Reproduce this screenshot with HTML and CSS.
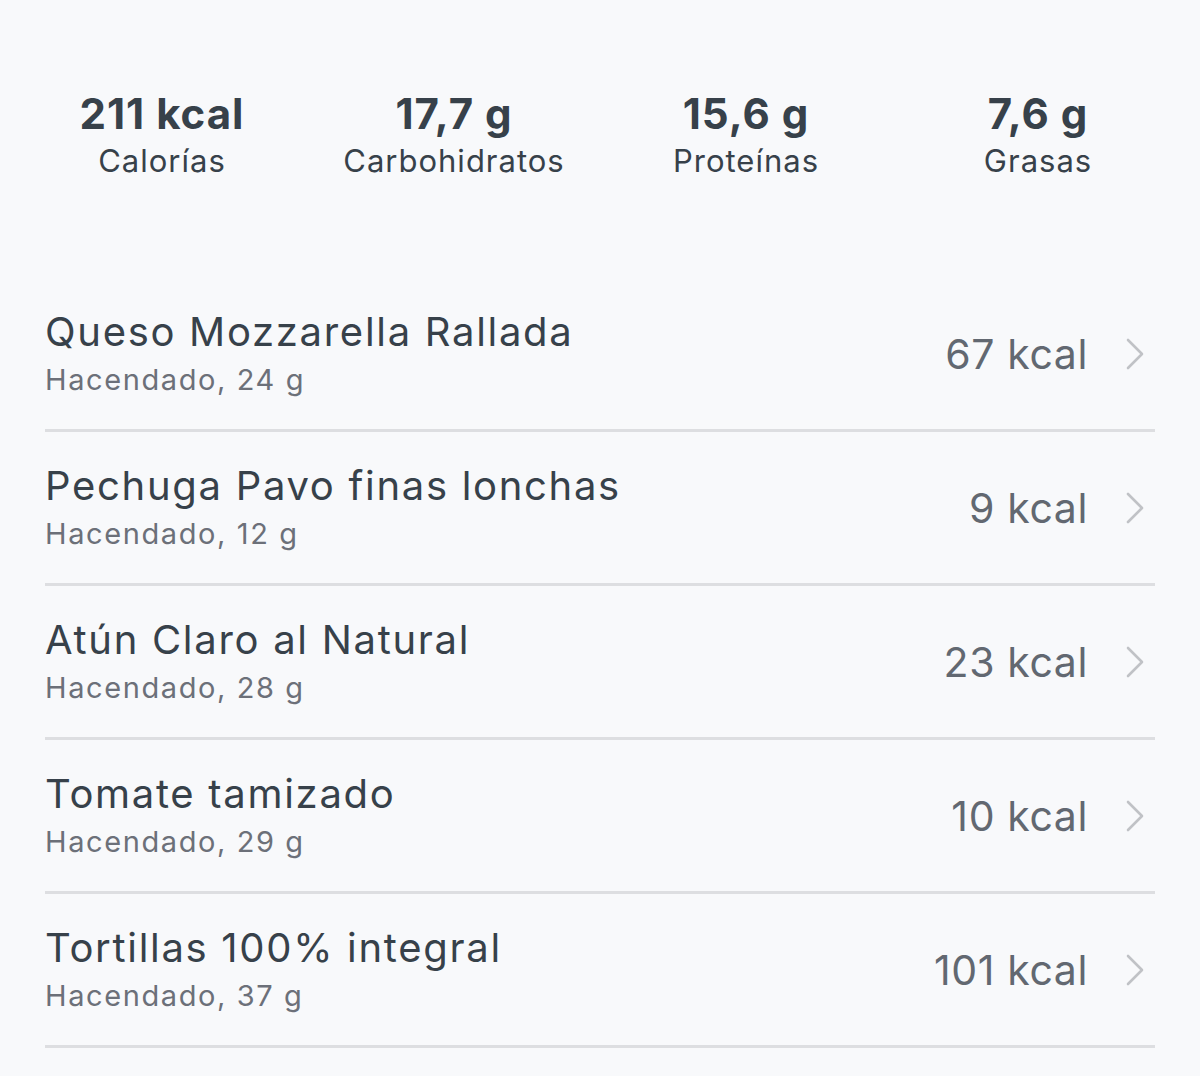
FILE: index.html
```html
<!DOCTYPE html>
<html lang="es">
<head>
<meta charset="utf-8">
<link rel="stylesheet" href="styles.css">
</head>
<body>
<div class="page">
  <section class="stats">
    <div class="stat"><div class="stat-value">211 kcal</div><div class="stat-label">Calorías</div></div>
    <div class="stat"><div class="stat-value">17,7 g</div><div class="stat-label">Carbohidratos</div></div>
    <div class="stat"><div class="stat-value">15,6 g</div><div class="stat-label">Proteínas</div></div>
    <div class="stat"><div class="stat-value">7,6 g</div><div class="stat-label">Grasas</div></div>
  </section>
  <ul class="list">
    <li class="row">
      <div class="info"><div class="name">Queso Mozzarella Rallada</div><div class="sub">Hacendado, 24 g</div></div>
      <div class="kcal">67 kcal</div>
      <svg class="chev" viewBox="0 0 18 32" width="18" height="32"><path d="M2 2 L16 16 L2 30" fill="none" stroke="currentColor" stroke-width="2.6" stroke-linecap="round" stroke-linejoin="round"/></svg>
    </li>
    <li class="row">
      <div class="info"><div class="name">Pechuga Pavo finas lonchas</div><div class="sub">Hacendado, 12 g</div></div>
      <div class="kcal">9 kcal</div>
      <svg class="chev" viewBox="0 0 18 32" width="18" height="32"><path d="M2 2 L16 16 L2 30" fill="none" stroke="currentColor" stroke-width="2.6" stroke-linecap="round" stroke-linejoin="round"/></svg>
    </li>
    <li class="row">
      <div class="info"><div class="name">Atún Claro al Natural</div><div class="sub">Hacendado, 28 g</div></div>
      <div class="kcal">23 kcal</div>
      <svg class="chev" viewBox="0 0 18 32" width="18" height="32"><path d="M2 2 L16 16 L2 30" fill="none" stroke="currentColor" stroke-width="2.6" stroke-linecap="round" stroke-linejoin="round"/></svg>
    </li>
    <li class="row">
      <div class="info"><div class="name">Tomate tamizado</div><div class="sub">Hacendado, 29 g</div></div>
      <div class="kcal">10 kcal</div>
      <svg class="chev" viewBox="0 0 18 32" width="18" height="32"><path d="M2 2 L16 16 L2 30" fill="none" stroke="currentColor" stroke-width="2.6" stroke-linecap="round" stroke-linejoin="round"/></svg>
    </li>
    <li class="row">
      <div class="info"><div class="name">Tortillas 100% integral</div><div class="sub">Hacendado, 37 g</div></div>
      <div class="kcal">101 kcal</div>
      <svg class="chev" viewBox="0 0 18 32" width="18" height="32"><path d="M2 2 L16 16 L2 30" fill="none" stroke="currentColor" stroke-width="2.6" stroke-linecap="round" stroke-linejoin="round"/></svg>
    </li>
  </ul>
</div>
</body>
</html>
```
FILE: styles.css
```css
html, body {
  margin: 0;
  padding: 0;
  background: #f8f9fb;
}
body {
  font-family: Inter, "Nunito Sans", "Open Sans", sans-serif;
  color: #37414a;
  width: 1200px;
  height: 1076px;
  overflow: hidden;
}
.page {
  padding-top: 90px;
}
.stats {
  display: grid;
  grid-template-columns: repeat(4, 1fr);
  padding: 0 16px;
}
.stat {
  text-align: center;
}
.stat-value {
  font-size: 42px;
  line-height: 48px;
  font-weight: 700;
  letter-spacing: 1px;
}
.stat-label {
  margin-top: 4px;
  font-size: 31px;
  line-height: 38px;
  font-weight: 400;
  letter-spacing: 1px;
}
.list {
  list-style: none;
  margin: 98px 45px 0 45px;
  padding: 0;
}
.row {
  display: flex;
  align-items: center;
  padding: 30px 11px 29px 0;
  border-bottom: 3px solid #dddee1;
}
.info {
  flex: 1;
}
.name {
  font-size: 40px;
  line-height: 48px;
  letter-spacing: 1.7px;
}
.sub {
  margin-top: 4px;
  font-size: 29px;
  line-height: 40px;
  color: #6c7079;
  letter-spacing: 1.6px;
}
.kcal {
  font-size: 41px;
  color: #626871;
  margin-right: 38px;
  letter-spacing: 0.6px;
}
.chev {
  color: #c0c2c6;
  display: block;
}
```
